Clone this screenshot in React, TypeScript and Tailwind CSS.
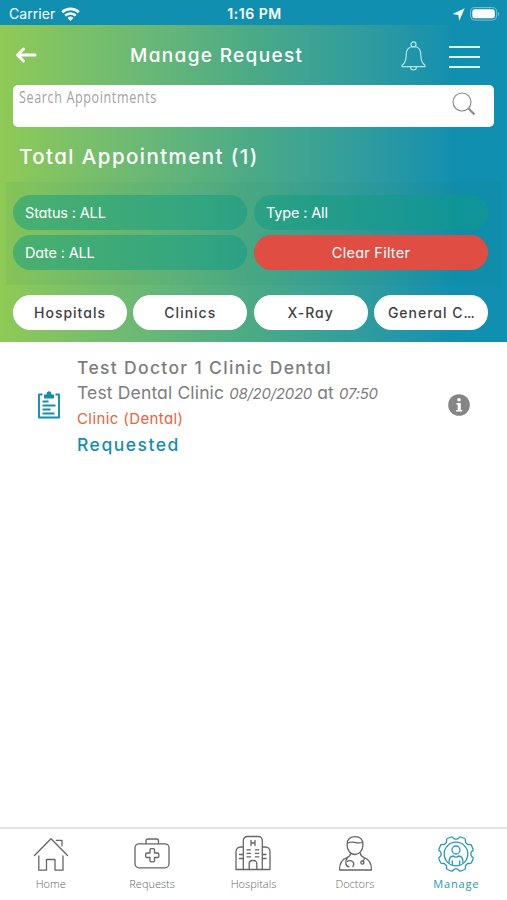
import React from 'react';
import { clsx } from 'clsx';

type TabId = 'home' | 'requests' | 'hospitals' | 'doctors' | 'manage';

const Filters = ['Status : ALL', 'Type : All', 'Date : ALL'];
const Categories = ['Hospitals', 'Clinics', 'X-Ray', 'General C...'];

const Tabs: { id: TabId; label: string }[] = [
  { id: 'home', label: 'Home' },
  { id: 'requests', label: 'Requests' },
  { id: 'hospitals', label: 'Hospitals' },
  { id: 'doctors', label: 'Doctors' },
  { id: 'manage', label: 'Manage' },
];

// Eight rounded teeth around the centre of a 36x36 box
const gearPath = () => {
  const at = (radius: number, deg: number) => {
    const rad = ((deg - 90) * Math.PI) / 180;
    return `${(18 + radius * Math.cos(rad)).toFixed(2)} ${(18 + radius * Math.sin(rad)).toFixed(2)}`;
  };
  let d = `M${at(14.9, 0)}`;
  for (let i = 0; i < 8; i++) {
    const a = i * 45;
    d += `Q${at(14.9, a + 7)} ${at(16.1, a + 9.5)}`;
    d += `Q${at(17.9, a + 11)} ${at(17.7, a + 16)}`;
    d += `L${at(17.7, a + 29)}`;
    d += `Q${at(17.9, a + 34)} ${at(16.1, a + 35.5)}`;
    d += `Q${at(14.9, a + 38)} ${at(14.9, a + 45)}`;
  }
  return d + 'Z';
};

function TabIcon({ id }: { id: TabId }) {
  return (
    <svg
      className="h-9 w-9 overflow-visible"
      viewBox="0 0 36 36"
      fill="none"
      stroke="currentColor"
      strokeWidth="1.3"
      strokeLinecap="round"
      strokeLinejoin="round"
    >
      {id === 'home' && (
        <path d="M1.5 19.500 18 2.800 34.500 19.500M5.800 20v14.200h7.700V23.500h8.500v10.700h8V20M23.300 4.300h5.700v5.500" />
      )}
      {id === 'requests' && (
        <>
          <rect x="1" y="7.8" width="34" height="24" rx="4" />
          <path d="M12 7.500V5a2 2 0 0 1 2-2h8.500a2 2 0 0 1 2 2v2.500" />
          <path d="M16 13.700a1 1 0 0 1 1-1h2.500a1 1 0 0 1 1 1v3.300h3.300a1 1 0 0 1 1 1v2.500a1 1 0 0 1-1 1h-3.300v3.300a1 1 0 0 1-1 1H17a1 1 0 0 1-1-1V21.500h-3.300a1 1 0 0 1-1-1v-2.500a1 1 0 0 1 1-1H16Z" />
        </>
      )}
      {id === 'hospitals' && (
        <>
          <path d="M8.300 33.500V4.500a4 4 0 0 1 4-4h11a4 4 0 0 1 4 4v29M8.300 11H5.500A4.500 4.500 0 0 0 1 15.500v18h34v-18a4.500 4.500 0 0 0-4.500-4.500h-3.200" />
          <path d="M14.200 33v-5.500a3 3 0 0 1 3-3h1.600a3 3 0 0 1 3 3V33M16 4.500v5M20 4.500v5M16 7h4M12 13.800h3.500M20.300 13.800h3.500M12 17.300h3.500M20.300 17.300h3.500M12 20.800h3.500M20.300 20.800h3.500M4.500 18.500H8M4.500 22.500H8M27.500 18.500H31M27.500 22.500H31" />
        </>
      )}
      {id === 'doctors' && (
        <>
          <path d="M10 8.500C10 3.500 13 .6 18 .6s8 2.900 8 7.900c0 5.500-3.500 10-8 10s-8-4.500-8-10ZM10.200 7.500C14 3.500 19 8.500 25.800 6.500" />
          <path d="M13.500 17.500c0 2-1 3-3.500 4-5 1.700-7.500 6.300-7.500 12.500h32c0-6.200-2.500-10.800-7.500-12.500-2.500-1-3.500-2-3.500-4" />
          <path d="M10.500 21.500c-2.500 3.500-2.500 9 1.500 9.200M10.300 25.300c4-2 8.500 1.500 5.500 5.200M27 21.500c.8 1.500.3 2.500-.8 3.700" />
          <circle cx="25.400" cy="26.600" r="1.600" />
        </>
      )}
      {id === 'manage' && (
        <>
          <path d={gearPath()} />
          <circle cx="18" cy="18" r="11.800" />
          <circle cx="18" cy="14" r="4" />
          <path d="M11 26.500c0-4 1-6.500 4.500-6.500 1.500 1.300 3.500 1.300 5 0 3.500 0 4.500 2.500 4.500 6.500M14.300 28.500V25M21.700 28.500V25" />
        </>
      )}
    </svg>
  );
}

function StatusBar() {
  return (
    <div className="flex h-[25px] items-center bg-[#108fb0] pt-[3px] pl-[9px] pr-[7px] font-['Inter',sans-serif] text-white [font-feature-settings:normal]">
      <div className="flex flex-1 items-center gap-[6px]">
        <span className="text-[14px] leading-none tracking-[0.050px]">Carrier</span>
        <svg className="h-[15px] w-[19px]" viewBox="0 0 19 15" fill="none" stroke="currentColor">
          <path d="M1.200 5.300a12 12 0 0 1 16.600 0" strokeWidth="2.700" />
          <path d="M4.200 8.600a7.600 7.600 0 0 1 10.600 0" strokeWidth="2.500" />
          <path d="M9.500 14 6.600 11a4.100 4.100 0 0 1 5.800 0Z" fill="currentColor" stroke="none" />
        </svg>
      </div>
      <span className="text-[14px] font-semibold leading-none tracking-[0.550px]">1:16 PM</span>
      <div className="flex flex-1 items-center justify-end gap-[5px]">
        <svg className="h-[13px] w-[13px]" viewBox="0 0 13 13" fill="currentColor">
          <path d="M12.700.2 7.200 12.700 6.400 6.900.7 6.100Z" />
        </svg>
        <svg className="h-[14px] w-[30px]" viewBox="0 0 30 14" fill="none">
          <rect x=".6" y=".6" width="26" height="12.500" rx="4" stroke="#7ac2d6" />
          <rect x="2.300" y="2.300" width="22.500" height="9" rx="2.500" fill="white" />
          <path d="M28 5v4c1.500-.4 1.500-3.600 0-4Z" fill="#7ac2d6" />
        </svg>
      </div>
    </div>
  );
}

function TitleBar() {
  return (
    <div className="flex h-[60px] items-center pl-[15px] pr-[27px] text-white">
      <svg className="h-[18px] w-[22px]" viewBox="0 0 22 18" fill="none" stroke="currentColor" strokeWidth="3" strokeLinecap="round" strokeLinejoin="round">
        <path d="M20 9H3M8.500 3 2.500 9l6 6" />
      </svg>
      <h1 className="ml-[93px] mt-[1px] w-[175px] whitespace-nowrap text-[19px] font-[450] leading-none tracking-[1.350px]">
        Manage Request
      </h1>
      <svg className="ml-auto mr-[23px] mt-[2px] h-[30px] w-[25px] text-[#b4e6ec]" viewBox="0 0 25 30" fill="none" stroke="currentColor" strokeWidth="1.200">
        <circle cx="12.500" cy="3.400" r="2.500" />
        <path d="M12.500 5.500c-5 0-7.300 3.500-7.300 8 0 6-1 8.500-3.700 10.200-1 .8-.8 2 .5 2h21c1.300 0 1.500-1.200.5-2-2.700-1.700-3.700-4.200-3.700-10.200 0-4.500-2.300-8-7.300-8ZM9.500 26c.2 4 5.800 4 6 0" />
      </svg>
      <div className="mt-[3px] flex w-[31px] flex-col gap-[8px]">
        <i className="h-[2px] bg-[#d8f6f8]" />
        <i className="h-[2px] bg-[#d8f6f8]" />
        <i className="h-[2px] bg-[#d8f6f8]" />
      </div>
    </div>
  );
}

function SearchBox() {
  return (
    <div className="mx-[13px] flex h-[42px] justify-between rounded-[5px] bg-white pl-[6px] pr-[18px]">
      <span className="w-[180px] origin-left scale-x-[0.76] whitespace-nowrap font-['Open_Sans',sans-serif] text-[16.500px] leading-[24px] tracking-[0.830px] text-[#a2a2a2]">
        Search Appointments
      </span>
      <svg className="mt-[7px] h-[24px] w-[24px]" viewBox="0 0 24 24" fill="none" stroke="#858585">
        <circle cx="10" cy="10" r="9" strokeWidth="1.100" />
        <path d="m16.500 16.500 6 6" strokeWidth="2" />
      </svg>
    </div>
  );
}

function FilterPanel() {
  return (
    <div className="mx-[6px] mt-[13px] grid h-[103px] grid-cols-[234px_234px] content-start gap-x-[7px] gap-y-[5px] bg-[#207a60]/[0.07] pl-[7px] pt-[13px] text-[14.500px] text-white">
      {Filters.map((filter) => (
        <button
          key={filter}
          className="h-[35px] rounded-full bg-linear-to-r from-[#0f9c80]/50 to-[#0f9c85]/50 px-[12px] text-left tracking-[-0.150px]"
        >
          {filter}
        </button>
      ))}
      <button className="h-[35px] rounded-full bg-[#e04d43] tracking-[0.250px]">Clear Filter</button>
    </div>
  );
}

function AppointmentRow() {
  return (
    <div className="flex items-center pl-[37px] pr-[37px] pt-[13px] text-[#7d7d7d]">
      <svg className="-mt-[2px] h-[28px] w-[24px] shrink-0 text-[#168eab]" viewBox="0 0 24 28" fill="none" stroke="currentColor" strokeWidth="1.900">
        <path d="M5.500 3.500H2v23h20v-23h-3.500" strokeLinejoin="round" />
        <path d="M7 7.500V3.500h2.500C9.500-.8 14.500-.8 14.500 3.500H17v4Z" fill="currentColor" stroke="none" />
        <path d="M5.500 10.500h6M5.500 14.500h13M5.500 18.500h8M5.500 22.500h12" />
      </svg>
      <div className="ml-[16px] flex-1 whitespace-nowrap">
        <div className="text-[17.500px] font-[450] leading-[25px] tracking-[1.330px]">Test Doctor 1 Clinic Dental</div>
        <div className="text-[17.500px] leading-[25px] tracking-[0.150px]">
          Test Dental Clinic <em className="text-[15px] tracking-[-0.250px]">08/20/2020</em> at{' '}
          <em className="text-[15px] tracking-[-0.250px]">07:50</em>
        </div>
        <div className="text-[15px] leading-[26px] tracking-[0.400px] text-[#e8623b]">Clinic (Dental)</div>
        <div className="text-[17.500px] font-medium leading-[25px] tracking-[1.500px] text-[#168eab]">Requested</div>
      </div>
      <svg className="-mt-[2px] h-[22px] w-[22px] shrink-0" viewBox="0 0 22 22">
        <circle cx="11" cy="11" r="10.800" fill="#858585" />
        <circle cx="11" cy="5.700" r="1.800" fill="white" />
        <path d="M8.300 9h4.500v7h1.400v1.500H8.200V16h1.500v-5.500H8.300Z" fill="white" />
      </svg>
    </div>
  );
}

function TabBar() {
  return (
    <nav className="grid h-[73px] grid-cols-5 border-t-2 border-[#e2e2e2] bg-white">
      {Tabs.map(({ id, label }) => {
        const isActive = id === 'manage';
        return (
          <button
            key={id}
            className={clsx(
              "flex flex-col items-center pt-[7px] font-['Open_Sans',sans-serif] text-[11px]",
              isActive ? 'font-medium tracking-[0.850px] text-[#2599b4]' : 'font-light text-[#666666]'
            )}
          >
            <TabIcon id={id} />
            <span className="mt-[4px] leading-[16px]">{label}</span>
          </button>
        );
      })}
    </nav>
  );
}

export default function App() {
  return (
    <div className="flex h-[900px] w-[507px] flex-col overflow-hidden bg-white font-['Inter',sans-serif] [font-feature-settings:'cv11']">
      <StatusBar />
      <header className="h-[317px] bg-linear-to-r from-[#8fca55] via-[#4aaa86] via-50% to-[#108fb0] to-90%">
        <TitleBar />
        <SearchBox />
        <h2 className="mt-[17px] whitespace-nowrap pl-[19px] text-[20.500px] font-[450] leading-[25px] tracking-[1.430px] text-white">
          Total Appointment (1)
        </h2>
        <FilterPanel />
        <div className="mt-[10px] flex gap-[6.300px] pl-[13px]">
          {Categories.map((category) => (
            <button
              key={category}
              className="h-[35px] w-[114px] whitespace-nowrap rounded-full bg-white text-[14px] font-medium tracking-[1px] text-[#3f3f3f]"
            >
              {category === 'General C...' ? (
                <>
                  General C<span className="tracking-[-0.800px]">...</span>
                </>
              ) : (
                category
              )}
            </button>
          ))}
        </div>
      </header>
      <main className="flex-1">
        <AppointmentRow />
      </main>
      <TabBar />
    </div>
  );
}
